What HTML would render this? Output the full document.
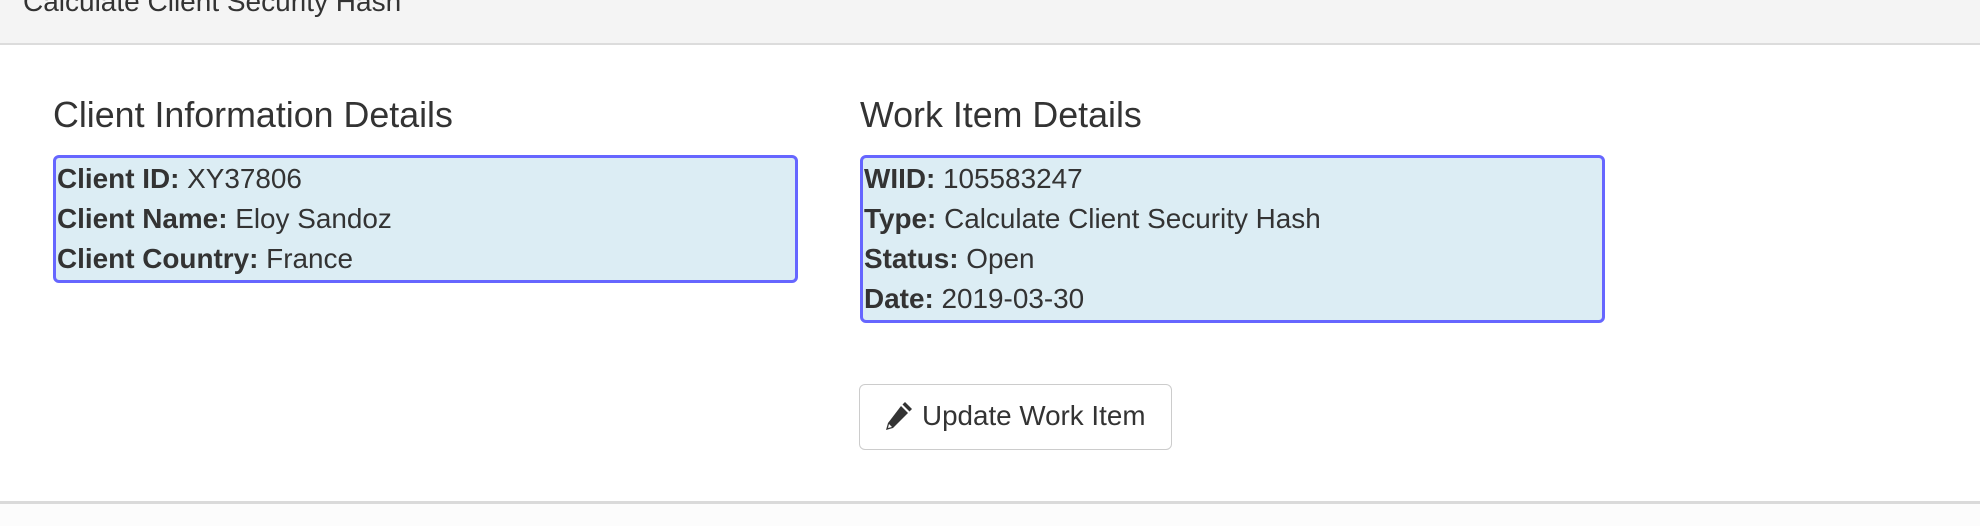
<!DOCTYPE html>
<html><head><meta charset="utf-8"><style>
html,body{margin:0;padding:0;width:1980px;height:526px;overflow:hidden;background:#fff;font-family:"Liberation Sans",Arial,sans-serif;color:#333;position:relative}
.hdr{position:absolute;left:0;top:0;width:1980px;height:43px;background:#f4f4f4;border-bottom:2px solid #dcdcdc}
.title{position:absolute;left:23px;top:-14px;font-size:28px;line-height:32px;white-space:nowrap}
h3{position:absolute;margin:0;font-weight:normal;font-size:35.8px;line-height:40px;top:95px;white-space:nowrap}
.box{position:absolute;top:155px;background:#dcedf4;border:3px solid #6666ff;border-radius:6px;box-sizing:border-box;padding:1px 0 0 1px;font-size:27.9px;line-height:40px}
.box div{white-space:nowrap}
b{font-weight:bold}
.btn{position:absolute;left:859px;top:384px;width:313px;height:66px;box-sizing:border-box;border:1.5px solid #ccc;border-radius:6px;background:#fff;font-size:27.8px;line-height:62px;white-space:nowrap}
.btn svg{position:absolute;left:25px;top:15px}
.btn span{position:absolute;left:62px;top:0px}
.foot{position:absolute;left:0;top:501px;width:1980px;height:3px;background:#dadada}
.foot2{position:absolute;left:0;top:504px;width:1980px;height:22px;background:#fcfcfc}
</style></head><body>
<div class="hdr"><div class="title">Calculate Client Security Hash</div></div>
<h3 style="left:53px">Client Information Details</h3>
<h3 style="left:860px">Work Item Details</h3>
<div class="box" style="left:53px;width:745px;height:128px">
<div><b>Client ID:</b> XY37806</div>
<div><b>Client Name:</b> Eloy Sandoz</div>
<div><b>Client Country:</b> France</div>
</div>
<div class="box" style="left:860px;width:745px;height:168px">
<div><b>WIID:</b> 105583247</div>
<div><b>Type:</b> Calculate Client Security Hash</div>
<div><b>Status:</b> Open</div>
<div><b>Date:</b> 2019-03-30</div>
</div>
<div class="btn"><svg width="29" height="31" viewBox="0 0 29 31"><path d="M20 2 L27 9 L24.5 11.5 L17.5 4.5 Z" fill="#333"/><path d="M16 6 L23 13 L8 28 L1 30 L3 23 Z" fill="#333"/><path d="M4 24 L7 27 L3 28 Z" fill="#fff"/></svg><span>Update Work Item</span></div>
<div class="foot"></div><div class="foot2"></div>
</body></html>
